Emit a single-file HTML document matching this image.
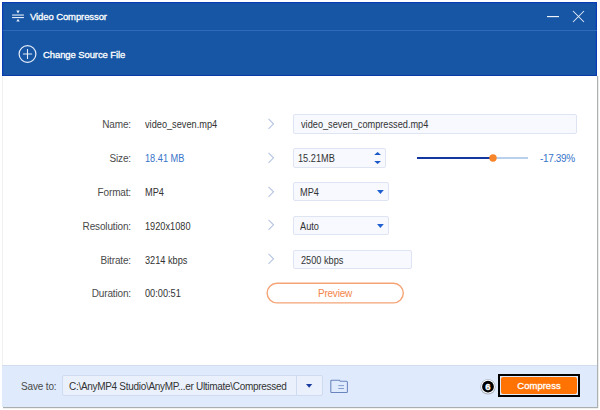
<!DOCTYPE html>
<html><head><meta charset="utf-8">
<style>
*{margin:0;padding:0;box-sizing:border-box}
html,body{width:600px;height:410px;background:#fff;overflow:hidden;font-family:"Liberation Sans",sans-serif;position:relative}
.a{position:absolute}
.t{position:absolute;white-space:nowrap;font-size:10px;letter-spacing:-0.35px;line-height:12px}
.sx{letter-spacing:0;transform:scaleX(0.92);transform-origin:0 0}
.wt{color:#fff;-webkit-text-stroke-width:0.3px;font-size:9.5px;letter-spacing:-0.1px}
.lbl{color:#4a4a4a;text-align:right;width:90px;left:41px;letter-spacing:-0.15px}
.val{color:#333;left:145px}
.box{position:absolute;background:#f7f9fe;border:1px solid #dfe4f2;border-radius:2px}
.chev{position:absolute;left:267px;width:10px;height:12px}
</style></head><body>
  <!-- window frame -->
  <div class="a" style="left:2px;top:2px;width:1px;height:405px;background:#f1f1f1"></div>
  <div class="a" style="left:597px;top:76px;width:1px;height:332px;background:#adb0b1"></div>
  <div class="a" style="left:598px;top:76px;width:1px;height:332px;background:#ececec"></div>
  <div class="a" style="left:3px;top:407px;width:595px;height:1px;background:#aab0b0"></div>
  <div class="a" style="left:3px;top:408px;width:595px;height:1px;background:#f0f0ec"></div>
  <!-- title + header -->
  <div class="a" style="left:2px;top:2px;width:595px;height:74px;background:#1656a5;border:1px solid #0a3db4;border-bottom:none"></div>
  <div class="a" style="left:3px;top:3px;width:593px;height:72px;border:1px solid #1350ac;border-bottom:none"></div>
  <div class="a" style="left:3px;top:30px;width:594px;height:1px;background:#2f6bba"></div>
  <div class="a" style="left:2px;top:75px;width:595px;height:1px;background:#0a3aa6"></div>

  <!-- title icon -->
  <svg class="a" style="left:10px;top:8px" width="16" height="16" viewBox="0 0 16 16">
    <rect x="2.1" y="6.5" width="11.8" height="1.1" fill="#e6edf8"/>
    <rect x="2.1" y="9" width="11.8" height="1.1" fill="#e6edf8"/>
    <path d="M6.3 2.6 L9.7 2.6 L8 5.6 Z" fill="#e6edf8"/>
    <path d="M6.3 13.6 L9.7 13.6 L8 10.8 Z" fill="#e6edf8"/>
  </svg>
  <div class="t wt" style="left:30px;top:11px">Video Compressor</div>
  <!-- min / close -->
  <div class="a" style="left:547px;top:16px;width:12px;height:1px;background:#eef3fb;box-shadow:0 0.5px 0 rgba(230,237,248,0.35)"></div>
  <svg class="a" style="left:571px;top:9px" width="14" height="14" viewBox="0 0 14 14">
    <path d="M2 2 L13 13 M13 2 L2 13" stroke="#e6edf8" stroke-width="1.05"/>
  </svg>
  <!-- change source -->
  <svg class="a" style="left:17px;top:44px" width="20" height="20" viewBox="0 0 20 20">
    <circle cx="10.5" cy="10" r="8.4" fill="none" stroke="#e6edf8" stroke-width="1.2"/>
    <path d="M10.5 5 V15 M5.9 10 H15.1" stroke="#e6edf8" stroke-width="1.1"/>
  </svg>
  <div class="t wt" style="left:43px;top:48.5px">Change Source File</div>

  <!-- rows -->
  <div class="t lbl" style="top:118.5px">Name:</div>
  <div class="t val sx" style="top:118.5px">video_seven.mp4</div>
  <div class="t lbl" style="top:152.5px">Size:</div>
  <div class="t val sx" style="top:152.5px;color:#3874c9">18.41 MB</div>
  <div class="t lbl" style="top:186.5px">Format:</div>
  <div class="t val sx" style="top:186.5px">MP4</div>
  <div class="t lbl" style="top:221px">Resolution:</div>
  <div class="t val sx" style="top:221px">1920x1080</div>
  <div class="t lbl" style="top:255px">Bitrate:</div>
  <div class="t val sx" style="top:255px">3214 kbps</div>
  <div class="t lbl" style="top:287.5px">Duration:</div>
  <div class="t val sx" style="top:287.5px">00:00:51</div>

  <!-- chevrons -->
  <svg class="chev" style="top:118px" viewBox="0 0 10 12"><path d="M1.5 0.8 L6.5 5.8 L1.5 10.8" fill="none" stroke="#b6c5e2" stroke-width="1.1"/></svg>
  <svg class="chev" style="top:152px" viewBox="0 0 10 12"><path d="M1.5 0.8 L6.5 5.8 L1.5 10.8" fill="none" stroke="#b6c5e2" stroke-width="1.1"/></svg>
  <svg class="chev" style="top:186px" viewBox="0 0 10 12"><path d="M1.5 0.8 L6.5 5.8 L1.5 10.8" fill="none" stroke="#b6c5e2" stroke-width="1.1"/></svg>
  <svg class="chev" style="top:219px" viewBox="0 0 10 12"><path d="M1.5 0.8 L6.5 5.8 L1.5 10.8" fill="none" stroke="#b6c5e2" stroke-width="1.1"/></svg>
  <svg class="chev" style="top:253px" viewBox="0 0 10 12"><path d="M1.5 0.8 L6.5 5.8 L1.5 10.8" fill="none" stroke="#b6c5e2" stroke-width="1.1"/></svg>

  <!-- inputs -->
  <div class="box" style="left:293px;top:114px;width:284px;height:20px"></div>
  <div class="t val sx" style="left:301px;top:118.5px">video_seven_compressed.mp4</div>
  <div class="box" style="left:293px;top:148px;width:93px;height:20px"></div>
  <div class="t val sx" style="left:298px;top:152.5px">15.21MB</div>
  <svg class="a" style="left:372px;top:151px" width="12" height="16" viewBox="0 0 12 16">
    <path d="M2.2 4.1 L5.6 0.9 L9 4.1 Z" fill="#1b58c8"/>
    <path d="M2.2 9.9 L5.6 13.1 L9 9.9 Z" fill="#1b58c8"/>
  </svg>
  <!-- slider -->
  <div class="a" style="left:417px;top:157px;width:76px;height:2px;background:#1238a0"></div>
  <div class="a" style="left:493px;top:157px;width:35px;height:2px;background:#b8cfee"></div>
  <svg class="a" style="left:485px;top:150px" width="16" height="16" viewBox="0 0 16 16"><circle cx="8" cy="8" r="3.7" fill="#f7862a"/></svg>
  <div class="t" style="left:540px;top:152.5px;color:#3874c9">-17.39%</div>

  <div class="box" style="left:293px;top:182px;width:96px;height:19px"></div>
  <div class="t val sx" style="left:300px;top:187px">MP4</div>
  <svg class="a" style="left:377px;top:189.5px" width="8" height="5" viewBox="0 0 8 5"><path d="M0 0 H6.8 L3.4 4.1 Z" fill="#1f5fd0"/></svg>
  <div class="box" style="left:293px;top:216px;width:96px;height:19px"></div>
  <div class="t val sx" style="left:300px;top:221px">Auto</div>
  <svg class="a" style="left:377px;top:223.5px" width="8" height="5" viewBox="0 0 8 5"><path d="M0 0 H6.8 L3.4 4.1 Z" fill="#1f5fd0"/></svg>

  <div class="box" style="left:293px;top:250px;width:119px;height:19px"></div>
  <div class="t val sx" style="left:301px;top:255px">2500 kbps</div>

  <svg class="a" style="left:264px;top:280px" width="144" height="26" viewBox="0 0 144 26"><rect x="3.1" y="3.3" width="136.2" height="19.6" rx="9.8" fill="none" stroke="#f5a477" stroke-width="1.4"/></svg>
  <div class="t" style="left:266px;top:288px;width:138px;text-align:center;color:#f38447;letter-spacing:-0.2px">Preview</div>

  <!-- bottom -->
  <div class="a" style="left:2px;top:365px;width:595px;height:42px;background:#dfeafc;border-top:1px solid #d2ddef"></div>
  <div class="t" style="left:21px;top:380.5px;color:#4a4a4a;letter-spacing:-0.15px">Save to:</div>
  <div class="box" style="left:62px;top:375px;width:261px;height:21px;background:#eaf1fd;border-color:#cfdbf0"></div>
  <div class="a" style="left:296px;top:376px;width:1px;height:19px;background:#cfdbf0"></div>
  <div class="t" style="left:69px;top:380.5px;color:#333;letter-spacing:-0.3px">C:\AnyMP4 Studio\AnyMP...er Ultimate\Compressed</div>
  <svg class="a" style="left:306px;top:384px" width="8" height="5" viewBox="0 0 8 5"><path d="M0 0 H6.3 L3.15 3.7 Z" fill="#1a3c9e"/></svg>
  <svg class="a" style="left:329px;top:378px" width="20" height="16" viewBox="0 0 20 16">
    <path d="M1.8 3.2 Q1.8 2.2 2.8 2.2 H10.5 L11.3 3.3 H17.4 Q18.4 3.3 18.4 4.3 V13.7 Q18.4 14.5 17.4 14.5 H2.8 Q1.8 14.5 1.8 13.7 Z" fill="none" stroke="#6a84bd" stroke-width="1.05"/>
    <path d="M9.3 7.6 H15 M9.3 10.5 H15" stroke="#7d95c6" stroke-width="0.9"/>
  </svg>
  <!-- badge -->
  <svg class="a" style="left:478px;top:377px" width="20" height="20" viewBox="0 0 20 20">
    <circle cx="10" cy="9.9" r="7.6" fill="#7d858f" opacity="0.6"/>
    <circle cx="10" cy="9.7" r="6.9" fill="#fff"/>
    <circle cx="10" cy="9.7" r="5.9" fill="#000"/>
    <text x="10" y="13.1" text-anchor="middle" font-family="Liberation Sans" font-weight="bold" font-size="9.5" fill="#fff" stroke="#fff" stroke-width="0.35">6</text>
  </svg>
  <!-- compress -->
  <div class="a" style="left:498px;top:374px;width:82px;height:23px;border:2.5px solid #000"></div>
  <div class="a" style="left:501px;top:377px;width:76px;height:17px;background:#ff7305;border-radius:2px"></div>
  <div class="t wt" style="left:501px;top:380px;width:76px;text-align:center;letter-spacing:0px">Compress</div>
</body></html>
